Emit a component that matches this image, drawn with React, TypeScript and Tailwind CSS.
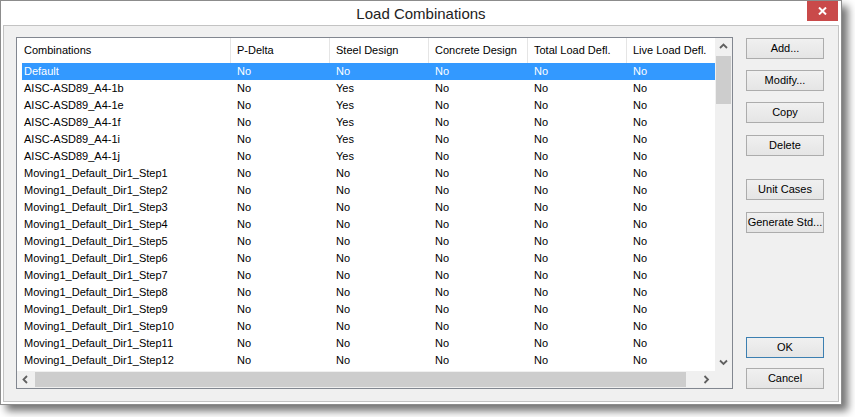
import React from "react";

const COLS = ["P-Delta", "Steel Design", "Concrete Design", "Total Load Defl.", "Live Load Defl."];

type Row = { name: string; vals: string[] };

const ROWS: Row[] = [
  { name: "Default", vals: ["No", "No", "No", "No", "No"] },
  ...["1b", "1e", "1f", "1i", "1j"].map((s) => ({
    name: `AISC-ASD89_A4-${s}`,
    vals: ["No", "Yes", "No", "No", "No"],
  })),
  ...Array.from({ length: 12 }, (_, i) => ({
    name: `Moving1_Default_Dir1_Step${i + 1}`,
    vals: ["No", "No", "No", "No", "No"],
  })),
];

// Scroll arrow chevron — small grey glyph
function Chevron({ dir }: { dir: "up" | "down" | "left" | "right" }) {
  const d = {
    up: "M1 5 L4.5 1.5 L8 5",
    down: "M1 1.5 L4.5 5 L8 1.5",
    left: "M5 1 L1.5 4.5 L5 8",
    right: "M1.5 1 L5 4.5 L1.5 8",
  }[dir];
  const vertical = dir === "up" || dir === "down";
  return (
    <svg width={vertical ? 9 : 7} height={vertical ? 7 : 9} viewBox={vertical ? "0 0 9 7" : "0 0 7 9"}>
      <path d={d} fill="none" stroke="#606060" strokeWidth="1.8" />
    </svg>
  );
}

function Button({ label, className = "", focused = false }: { label: string; className?: string; focused?: boolean }) {
  return (
    <div
      className={`w-[78px] h-[21px] flex items-center justify-center border bg-gradient-to-b from-[#f0f0f0] to-[#e5e5e5] text-[11px] text-black ${
        focused ? "border-[#3c7fb1]" : "border-[#acacac]"
      } ${className}`}
    >
      {label}
    </div>
  );
}

export default function App() {
  return (
    <div className="min-h-screen bg-white font-['Liberation_Sans',Arial,sans-serif]">
      <div className="w-[842px] h-[405px] bg-white border border-[#8c8c8c] shadow-[6px_6px_8px_rgba(0,0,0,0.55)] flex flex-col">
        {/* Title bar */}
        <div className="relative h-[24px] flex items-center justify-center shrink-0">
          <span className="text-[15px] text-[#222] leading-none">Load Combinations</span>
          <div className="absolute top-0 right-[3px] w-[31px] h-[20px] bg-[#c94a4a] flex items-center justify-center">
            <svg width="9" height="8" viewBox="0 0 9 8">
              <path d="M1 0.5 L8 7.5 M8 0.5 L1 7.5" stroke="#fff" strokeWidth="2" />
            </svg>
          </div>
        </div>

        {/* Client area */}
        <div className="flex-1 mx-[2px] mb-[2px] border border-[#c3c3c3] bg-[#f0f0f0] flex items-start pl-[12px] pt-[11px]">
          {/* List view */}
          <div className="w-[717px] h-[352px] border border-[#828790] bg-white flex flex-col shrink-0">
            <div className="flex h-[333px]">
              <div className="w-[698px] h-[333px] overflow-hidden">
                <div className="flex h-[25px] w-max">
                  <div className="w-[214px] pl-[7px] border-r border-[#e5e5e5] flex items-center text-[11px] text-black">
                    Combinations
                  </div>
                  {COLS.map((c) => (
                    <div
                      key={c}
                      className="w-[99px] pl-[6px] border-r border-[#e5e5e5] flex items-center text-[11px] text-black whitespace-nowrap"
                    >
                      {c}
                    </div>
                  ))}
                </div>
                {ROWS.map((r, i) => (
                  <div
                    key={r.name}
                    className={`ml-[5px] flex h-[17px] w-max text-[11px] ${
                      i === 0 ? "bg-[#3399ff] text-white" : "text-black"
                    }`}
                  >
                    <div className="w-[209px] pl-[2px] flex items-center whitespace-nowrap">{r.name}</div>
                    {r.vals.map((v, j) => (
                      <div key={j} className="w-[99px] pl-[6px] flex items-center">
                        {v}
                      </div>
                    ))}
                  </div>
                ))}
              </div>
              {/* Vertical scrollbar */}
              <div className="w-[17px] h-[333px] bg-[#f0f0f0] flex flex-col">
                <div className="h-[17px] flex items-center justify-center">
                  <Chevron dir="up" />
                </div>
                <div className="mt-[1px] mx-[1px] h-[48px] bg-[#cdcdcd]" />
                <div className="flex-1" />
                <div className="h-[17px] flex items-center justify-center">
                  <Chevron dir="down" />
                </div>
              </div>
            </div>
            {/* Horizontal scrollbar */}
            <div className="flex h-[17px]">
              <div className="w-[698px] h-[17px] bg-[#f0f0f0] flex items-center">
                <div className="w-[17px] h-[17px] flex items-center justify-center">
                  <Chevron dir="left" />
                </div>
                <div className="ml-[1px] h-[15px] w-[651px] bg-[#cdcdcd]" />
                <div className="flex-1" />
                <div className="w-[17px] h-[17px] flex items-center justify-center">
                  <Chevron dir="right" />
                </div>
              </div>
              <div className="w-[17px] h-[17px] bg-[#f0f0f0]" />
            </div>
          </div>

          {/* Buttons */}
          <div className="ml-[13px] mt-[1px] flex flex-col">
            <Button label="Add..." />
            <Button label="Modify..." className="mt-[11px]" />
            <Button label="Copy" className="mt-[11px]" />
            <Button label="Delete" className="mt-[12px]" />
            <Button label="Unit Cases" className="mt-[23px]" />
            <Button label="Generate Std..." className="mt-[12px]" />
            <Button label="OK" focused className="mt-[104px]" />
            <Button label="Cancel" className="mt-[10px]" />
          </div>
        </div>
      </div>
    </div>
  );
}
